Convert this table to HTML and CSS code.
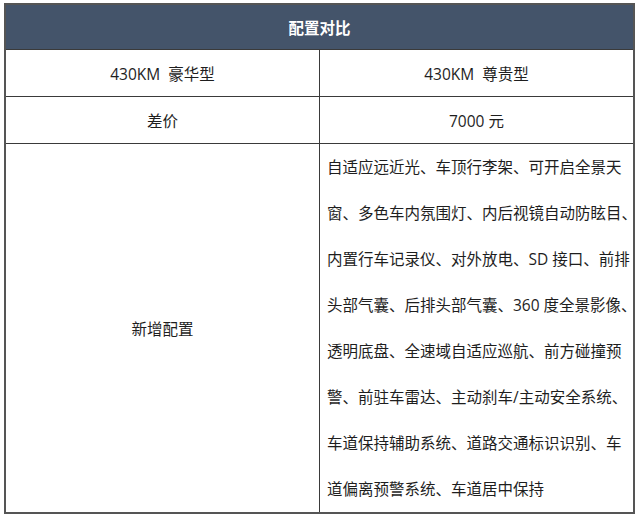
FILE: index.html
```html
<!DOCTYPE html>
<html lang="zh">
<head>
<meta charset="utf-8">
<link rel="stylesheet" href="styles.css">
</head>
<body>
<div class="wrap">
<table class="cmp">
  <thead>
    <tr><th colspan="2" class="title">配置对比</th></tr>
  </thead>
  <tbody>
    <tr class="row"><td class="c-left">430KM&nbsp; 豪华型</td><td class="c-right center">430KM&nbsp; 尊贵型</td></tr>
    <tr class="row"><td class="c-left">差价</td><td class="c-right center">7000 元</td></tr>
    <tr class="big">
      <td class="c-left">新增配置</td>
      <td class="c-right list">自适应远近光、车顶行李架、可开启全景天<br>窗、多色车内氛围灯、内后视镜自动防眩目、<br>内置行车记录仪、对外放电、SD 接口、前排<br>头部气囊、后排头部气囊、360 度全景影像、<br>透明底盘、全速域自适应巡航、前方碰撞预<br>警、前驻车雷达、主动刹车/主动安全系统、<br>车道保持辅助系统、道路交通标识识别、车<br>道偏离预警系统、车道居中保持</td>
    </tr>
  </tbody>
</table>
</div>
</body>
</html>
```
FILE: styles.css
```css
html, body {
  margin: 0;
  padding: 0;
  background: #ffffff;
}
.wrap {
  padding: 3px 0 0 4px;
}
.cmp {
  width: 631px;
  border-collapse: collapse;
  table-layout: fixed;
  font-family: "Open Sans", "Noto Sans CJK SC", sans-serif;
  font-size: 15.5px;
  color: #1e1e1e;
  border: 2px solid #555;
}
.cmp td, .cmp th {
  border: 1px solid #3a3a3a;
  padding: 0;
}
.title {
  height: 44px;
  background: #44546a;
  color: #ffffff;
  font-weight: bold;
  font-size: 15.5px;
  text-align: center;
  border-color: #2a2a2a;
}
.row td {
  height: 46px;
  text-align: center;
}
.c-left {
  width: 315px;
  text-align: center;
}
.list {
  text-align: left;
  line-height: 46px;
  padding: 0 0 0 7px !important;
  white-space: nowrap;
  letter-spacing: 0;
}
.big td {
  height: 367px;
  vertical-align: middle;
}
```
